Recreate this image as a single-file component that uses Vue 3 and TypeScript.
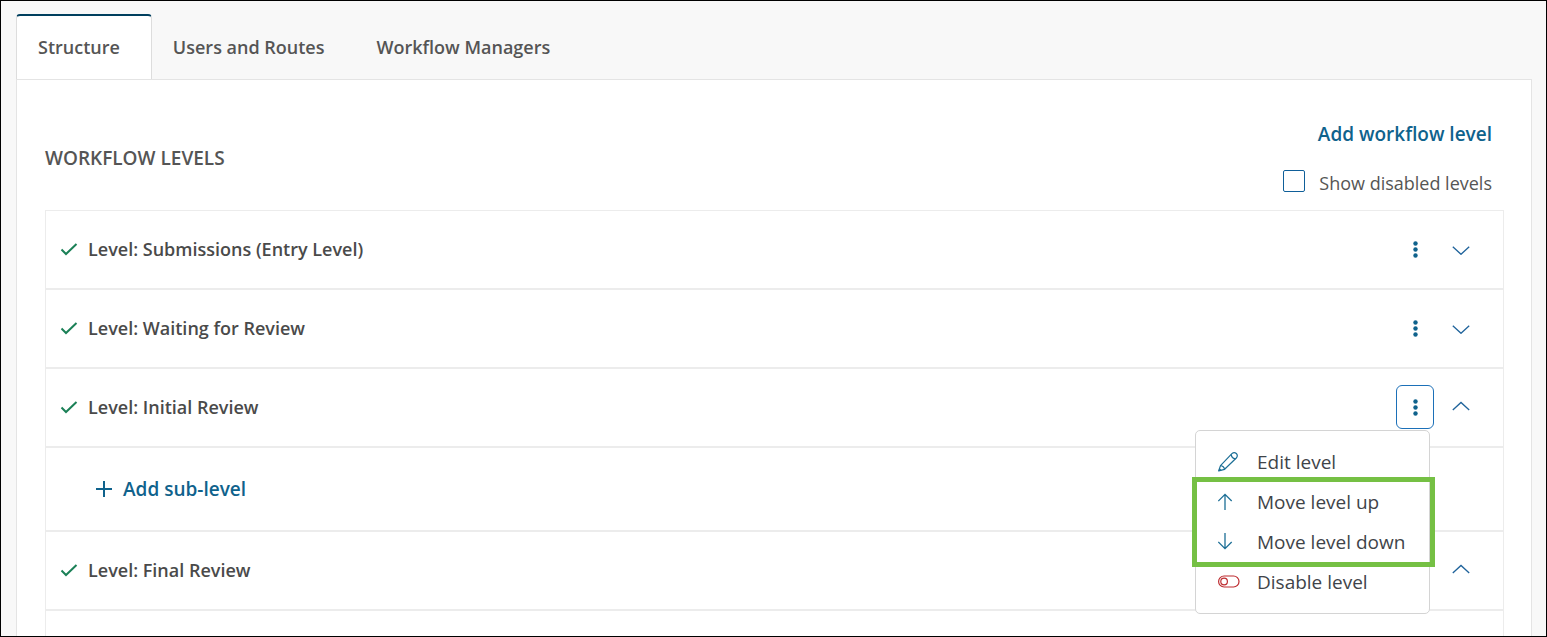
<script setup lang="ts">
import { ref } from 'vue'

interface Level {
  id: number
  name: string
  open: boolean
  subLevels: boolean
}

const tabs = ['Structure', 'Users and Routes', 'Workflow Managers']
const activeTab = ref('Structure')
const showDisabled = ref(false)
const menuFor = ref<number | null>(3)

const levels = ref<Level[]>([
  { id: 1, name: 'Submissions (Entry Level)', open: false, subLevels: false },
  { id: 2, name: 'Waiting for Review', open: false, subLevels: false },
  { id: 3, name: 'Initial Review', open: true, subLevels: true },
  { id: 4, name: 'Final Review', open: true, subLevels: false },
])

function toggleMenu(id: number): void {
  menuFor.value = menuFor.value === id ? null : id
}
</script>

<template>
  <div class="page">
    <div class="tabs" role="tablist">
      <button
        v-for="tab in tabs"
        :key="tab"
        type="button"
        role="tab"
        class="tab"
        :class="{ active: tab === activeTab }"
        :aria-selected="tab === activeTab"
        @click="activeTab = tab"
      >{{ tab }}</button>
    </div>

    <main class="panel">
      <header class="head">
        <h2 class="title">WORKFLOW LEVELS</h2>
        <div class="tools">
          <button type="button" class="link add-level">Add workflow level</button>
          <label class="toggle" for="show-disabled">
            <input id="show-disabled" v-model="showDisabled" type="checkbox" class="box" />
            <span>Show disabled levels</span>
          </label>
        </div>
      </header>

      <section class="list">
        <template v-for="level in levels" :key="level.id">
          <div class="row">
            <div class="label">
              <svg class="check" width="18" height="14" viewBox="0 0 18 14" aria-hidden="true">
                <path d="M1.500 7.500 6 12 16.500 2" fill="none" stroke="currentColor" stroke-width="2" />
              </svg>
              <span>Level: {{ level.name }}</span>
            </div>

            <div class="kebab-wrap">
              <button
                type="button"
                class="kebab"
                :class="{ focused: menuFor === level.id }"
                :aria-label="'Options for ' + level.name"
                :aria-expanded="menuFor === level.id"
                @click="toggleMenu(level.id)"
              >
                <svg width="6" height="18" viewBox="0 0 6 18" aria-hidden="true">
                  <circle cx="3.500" cy="3.500" r="2.200" fill="currentColor" />
                  <circle cx="3.500" cy="9.500" r="2.200" fill="currentColor" />
                  <circle cx="3.500" cy="15.500" r="2.200" fill="currentColor" />
                </svg>
              </button>

              <div v-if="menuFor === level.id" class="menu" role="menu">
                <button type="button" class="item" role="menuitem">
                  <svg width="22" height="22" viewBox="0 0 22 22" aria-hidden="true">
                    <g fill="none" stroke="currentColor" stroke-width="1.200" stroke-linejoin="round">
                      <path d="M.7 19.800 2.500 14.600 13.900 2.600Q16.200 .6 18.300 2.500 20.300 4.600 18.300 7L6.600 18.300Z" />
                      <path d="M13.200 3.400Q13.600 7.300 17.400 7.800M2.500 14.600Q5.900 14.900 6.600 18.300" />
                    </g>
                    <path d="M.4 20.200 1.500 17 3.700 19.200Z" fill="currentColor" />
                  </svg>
                  <span>Edit level</span>
                </button>
                <div class="group">
                  <button type="button" class="item" role="menuitem">
                    <svg width="22" height="22" viewBox="0 0 22 22" aria-hidden="true">
                      <path d="M7 19V3.500M.3 10 7 3.300 13.700 10" fill="none" stroke="currentColor" stroke-width="1.300" />
                    </svg>
                    <span>Move level up</span>
                  </button>
                  <button type="button" class="item" role="menuitem">
                    <svg width="22" height="22" viewBox="0 0 22 22" aria-hidden="true">
                      <path d="M7 2V17.500M.3 11 7 17.700 13.700 11" fill="none" stroke="currentColor" stroke-width="1.300" />
                    </svg>
                    <span>Move level down</span>
                  </button>
                </div>
                <button type="button" class="item danger" role="menuitem">
                  <svg width="22" height="22" viewBox="0 0 22 22" aria-hidden="true">
                    <g fill="none" stroke="currentColor" stroke-width="1.200">
                      <rect x=".6" y="5" width="20.400" height="11" rx="5.500" />
                      <circle cx="6.100" cy="10.500" r="3.300" />
                    </g>
                  </svg>
                  <span>Disable level</span>
                </button>
              </div>
            </div>

            <button
              type="button"
              class="chevron"
              :aria-label="(level.open ? 'Collapse ' : 'Expand ') + level.name"
              :aria-expanded="level.open"
              @click="level.open = !level.open"
            >
              <svg width="18" height="12" viewBox="0 0 18 12" aria-hidden="true">
                <path
                  :d="level.open ? 'M.8 9 9 1.400 17.200 9' : 'M.8 3.700 9 11.300 17.200 3.700'"
                  fill="none"
                  stroke="currentColor"
                  stroke-width="1.300"
                />
              </svg>
            </button>
          </div>

          <div v-if="level.open && level.subLevels" class="row sub">
            <button type="button" class="link add-sub">
              <svg width="16" height="16" viewBox="0 0 16 16" aria-hidden="true">
                <path d="M8 0V16M0 8H16" fill="none" stroke="currentColor" stroke-width="2" />
              </svg>
              <span>Add sub-level</span>
            </button>
          </div>
        </template>
      </section>
    </main>
  </div>
</template>

<style>
body {
  margin: 0;
}
</style>

<style scoped>
.page {
  box-sizing: border-box;
  display: flex;
  flex-direction: column;
  min-height: 100vh;
  padding: 13px 14px 0 15px;
  border: 1px solid #000;
  background: #f8f8f8;
  color: #4a4a4a;
  font-family: "Open Sans", "Noto Sans", sans-serif;
  font-size: 18px;
  line-height: 24px;
}

button {
  margin: 0;
  padding: 0;
  border: 0;
  background: none;
  color: inherit;
  font: inherit;
  cursor: pointer;
}

svg {
  display: block;
  flex: none;
}

.tabs {
  display: flex;
}

.tab {
  box-sizing: border-box;
  height: 66px;
  padding: 0 31px 0 21px;
  color: #555;
  font-weight: 600;
}

.tab.active {
  padding-bottom: 2px;
  border: 1px solid #ddd;
  border-top: 2px solid #003f5e;
  border-bottom: 0;
  border-radius: 4px 4px 0 0;
  background: #fff;
}

.panel {
  display: flex;
  flex: 1;
  flex-direction: column;
  margin-top: -1px;
  padding: 40px 27px 0 28px;
  border: 1px solid #e4e4e4;
  border-bottom: 0;
  background: #fff;
}

.head {
  display: flex;
  justify-content: space-between;
  align-items: center;
  padding: 0 12px 14px 0;
}

.title {
  margin: 0;
  color: #555;
  font-size: 19px;
  font-weight: 600;
}

.tools {
  display: flex;
  flex-direction: column;
  align-items: flex-end;
  gap: 24px;
  padding-top: 2px;
}

.link {
  color: #0f628c;
  font-size: 19px;
  font-weight: 600;
}

.toggle {
  display: flex;
  align-items: center;
  gap: 14px;
  color: #555;
}

.box {
  box-sizing: border-box;
  width: 22px;
  height: 22px;
  margin: 0 0 4px;
  border: 1px solid #0f5f99;
  border-radius: 2px;
  background: #fff;
  appearance: none;
}

.box:checked {
  background: #0f628c;
}

.list {
  flex: 1;
  border: 1px solid #ececec;
  border-bottom: 0;
}

.row {
  display: flex;
  align-items: center;
  height: 77px;
  padding: 0 23px 0 14px;
  border-bottom: 2px solid #ececec;
}

.row.sub {
  height: 82px;
  padding-left: 50px;
}

.label {
  display: flex;
  flex: 1;
  align-items: center;
  gap: 10px;
  padding-bottom: 1px;
  font-weight: 600;
}

.check {
  color: #1b8057;
}

.kebab-wrap {
  position: relative;
  margin-bottom: 1px;
}

.kebab {
  box-sizing: border-box;
  display: flex;
  align-items: center;
  justify-content: center;
  width: 38px;
  height: 44px;
  border: 1px solid transparent;
  border-radius: 6px;
  color: #0f628c;
}

.kebab.focused {
  border-color: #1c70b8;
}

.chevron {
  display: flex;
  align-items: center;
  justify-content: center;
  width: 38px;
  height: 44px;
  margin: 0 0 1px 8px;
  color: #1f639b;
}

.menu {
  position: absolute;
  z-index: 2;
  top: 45px;
  right: 4px;
  box-sizing: border-box;
  width: 235px;
  padding: 11px 0;
  border: 1px solid #d4d4d4;
  border-radius: 5px;
  background: #fff;
  color: #3f4449;
  font-size: 19px;
}

.item {
  display: flex;
  align-items: center;
  gap: 17px;
  width: 100%;
  height: 40px;
  padding-left: 22px;
  text-align: left;
}

.item svg {
  color: #1d6f96;
}

.item.danger svg {
  color: #bd2b2f;
}

.group {
  position: relative;
}

.group::after {
  content: "";
  position: absolute;
  inset: -5px -6px -5px -4px;
  border: 5px solid #75c044;
  pointer-events: none;
}

.add-sub {
  display: flex;
  align-items: center;
  gap: 11px;
}
</style>
